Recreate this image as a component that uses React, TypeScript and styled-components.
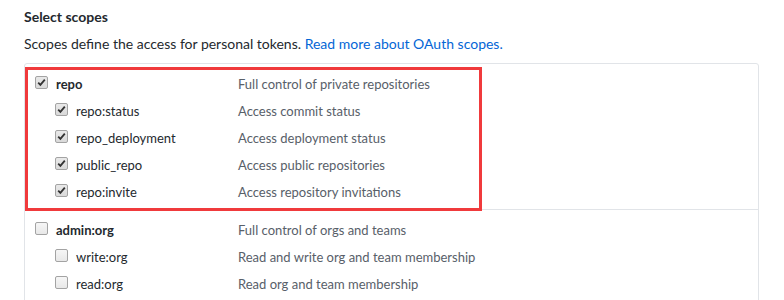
import React from "react";
import styled, { createGlobalStyle } from "styled-components";

interface Scope {
  name: string;
  description: string;
  checked: boolean;
  children?: Scope[];
}

const scopes: Scope[] = [
  {
    name: "repo",
    description: "Full control of private repositories",
    checked: true,
    children: [
      { name: "repo:status", description: "Access commit status", checked: true },
      { name: "repo_deployment", description: "Access deployment status", checked: true },
      { name: "public_repo", description: "Access public repositories", checked: true },
      { name: "repo:invite", description: "Access repository invitations", checked: true },
    ],
  },
  {
    name: "admin:org",
    description: "Full control of orgs and teams",
    checked: false,
    children: [
      { name: "write:org", description: "Read and write org and team membership", checked: false },
      { name: "read:org", description: "Read org and team membership", checked: false },
    ],
  },
];

const GlobalStyle = createGlobalStyle`
  body {
    margin: 0;
    background: #fff;
    font-family: Lato, "Open Sans", sans-serif;
    font-size: 14px;
    color: #24292e;
  }
`;

const Page = styled.div`
  padding: 6px 25px 0 24px;
  width: 735px;
`;

const Heading = styled.h3`
  margin: 0;
  font-size: 14px;
  font-weight: 700;
  line-height: 21px;
`;

const Note = styled.p`
  margin: 6px 0 9px;
  line-height: 21px;
  color: #24292e;
`;

const Link = styled.a`
  color: #0366d6;
  text-decoration: none;
`;

const ScopeBox = styled.div`
  border: 1px solid #e1e4e8;
  border-radius: 3px;
  height: 240px;
  overflow: hidden;
`;

const Group = styled.div<{ $first?: boolean; $highlight?: boolean }>`
  position: relative;
  padding: 6px 0 4px;
  border-top: ${(p) => (p.$first ? "none" : "1px solid #e1e4e8")};
  &::after {
    content: "";
    display: ${(p) => (p.$highlight ? "block" : "none")};
    position: absolute;
    left: 0;
    top: 3px;
    bottom: -2px;
    width: 457px;
    border: 3px solid #f03a3c;
    box-sizing: border-box;
    z-index: 2;
  }
`;

const Row = styled.div`
  display: grid;
  grid-template-columns: 203px 1fr;
  padding-left: 10px;
  height: 27px;
  align-items: center;
  font-size: 13px;
`;

const Label = styled.label<{ $nested?: boolean; $top?: boolean }>`
  display: flex;
  align-items: center;
  gap: 8px;
  padding-left: ${(p) => (p.$nested ? "20px" : "0")};
  font-weight: ${(p) => (p.$top ? 700 : 400)};
  color: #24292e;
`;

const Description = styled.span`
  color: #586069;
`;

const Box = styled.span<{ $checked: boolean }>`
  display: inline-flex;
  align-items: center;
  justify-content: center;
  width: 13px;
  height: 13px;
  box-sizing: border-box;
  border: 1px solid #a3a3a3;
  border-radius: 2px;
  background: ${(p) =>
    p.$checked
      ? "linear-gradient(#e9e9e9, #d9d9d9)"
      : "linear-gradient(#f6f6f6, #e8e8e8)"};
  margin-top: -3px;
`;

const CheckBox: React.FC<{ checked: boolean }> = ({ checked }) => (
  <Box $checked={checked}>
    {checked && (
      <svg width="9" height="9" viewBox="0 0 9 9">
        <path d="M1.2 4.6 L3.4 6.9 L7.8 1.6" fill="none" stroke="#333" strokeWidth="1.8" />
      </svg>
    )}
  </Box>
);

const ScopeRow: React.FC<{ scope: Scope; nested?: boolean }> = ({ scope, nested }) => (
  <Row>
    <Label $nested={nested} $top={!nested}>
      <CheckBox checked={scope.checked} />
      {scope.name}
    </Label>
    <Description>{scope.description}</Description>
  </Row>
);

export default function App() {
  return (
    <Page>
      <GlobalStyle />
      <Heading>Select scopes</Heading>
      <Note>
        Scopes define the access for personal tokens.{" "}
        <Link href="#">Read more about OAuth scopes.</Link>
      </Note>
      <ScopeBox>
        {scopes.map((s, i) => (
          <Group key={s.name} $first={i === 0} $highlight={i === 0}>
            <ScopeRow scope={s} />
            {s.children?.map((c) => (
              <ScopeRow key={c.name} scope={c} nested />
            ))}
          </Group>
        ))}
      </ScopeBox>
    </Page>
  );
}
